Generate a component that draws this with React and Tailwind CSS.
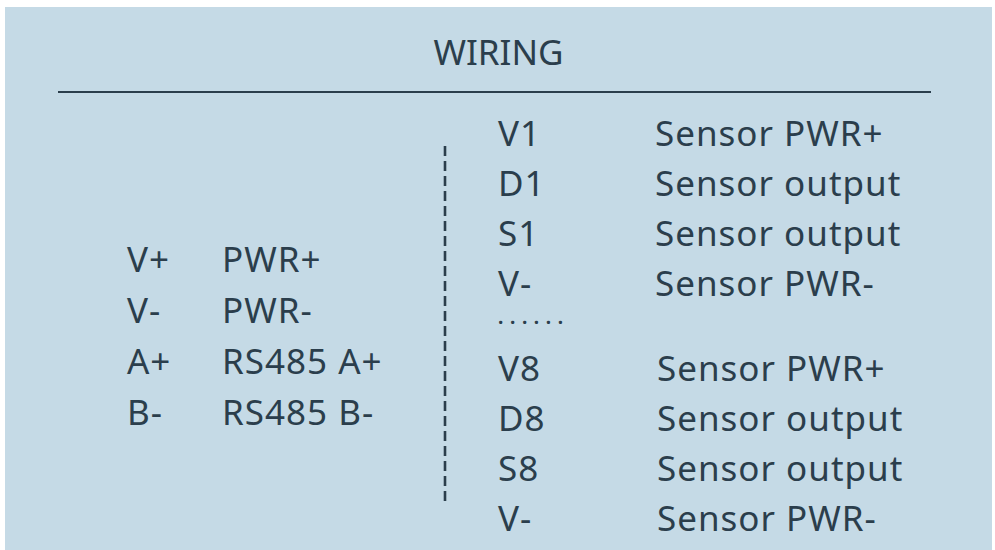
import React from 'react';

const leftRows = [
  ['V+', 'PWR+'],
  ['V-', 'PWR-'],
  ['A+', 'RS485 A+'],
  ['B-', 'RS485 B-'],
];

const rightTop = [
  ['V1', 'Sensor PWR+'],
  ['D1', 'Sensor output'],
  ['S1', 'Sensor output'],
  ['V-', 'Sensor PWR-'],
];

const rightBottom = [
  ['V8', 'Sensor PWR+'],
  ['D8', 'Sensor output'],
  ['S8', 'Sensor output'],
  ['V-', 'Sensor PWR-'],
];

const PinRow = ({ pin, label, pinWidth, height = 'h-[50px]' }) => (
  <div className={`flex items-center ${height}`}>
    <span className={pinWidth}>{pin}</span>
    <span>{label}</span>
  </div>
);

export default function App() {
  return (
    <div className="w-[995px] h-[550px] bg-white pl-[5px] pt-[7px] pr-[3px] overflow-hidden">
      <div
        className="w-full h-full bg-[#c5dae6] text-[#2b3e4c] text-[35px] leading-none tracking-[1px]"
        style={{ fontFamily: '"Noto Sans", "Open Sans", sans-serif' }}
      >
        <div className="h-[84px] flex items-center justify-center pt-[4px] tracking-[0px]">
          WIRING
        </div>
        <div className="ml-[53px] w-[873px] h-[2px] bg-[#2b3e4c]" />

        <div className="flex">
          <div className="w-[435px] pl-[122px] pt-[140px]">
            {leftRows.map(([pin, label], i) => (
              <PinRow key={i} pin={pin} label={label} pinWidth="w-[95px]" height="h-[51px]" />
            ))}
          </div>

          <div className="w-[10px] pt-[53px]">
            <svg width="10" height="356" viewBox="0 0 10 356">
              <line
                x1="5"
                y1="0"
                x2="5"
                y2="356"
                stroke="#2b3e4c"
                strokeWidth="2.6"
                strokeDasharray="10 5"
              />
            </svg>
          </div>

          <div className="pl-[48px] pt-[14px]">
            {rightTop.map(([pin, label], i) => (
              <PinRow key={i} pin={pin} label={label} pinWidth="w-[157px]" />
            ))}
            <div className="h-[35px] flex items-start pt-[9px]">
              <span className="text-[19px] font-bold leading-[2px] tracking-[6.6px]">......</span>
            </div>
            {rightBottom.map(([pin, label], i) => (
              <PinRow key={i} pin={pin} label={label} pinWidth="w-[159px]" />
            ))}
          </div>
        </div>
      </div>
    </div>
  );
}
